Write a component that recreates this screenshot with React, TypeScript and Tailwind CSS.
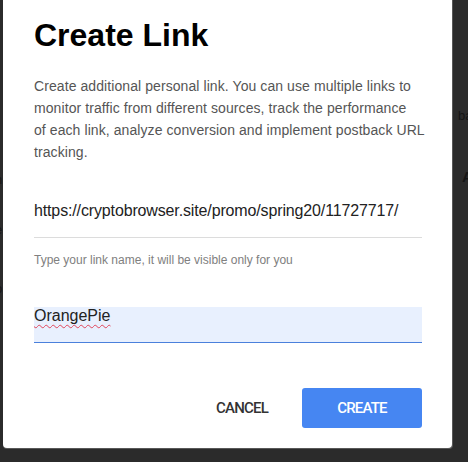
import React from "react";

export default function App() {
  return (
    <div
      className="relative w-[468px] h-[462px] overflow-hidden bg-[#2b2b2b]"
      style={{ fontFamily: '"Liberation Sans", Arial, sans-serif' }}
    >
      {/* faint page content behind the backdrop */}
      <div className="absolute left-[458px] top-[108px] flex flex-col gap-[44px] text-[#151515]">
        <span className="text-[13px] leading-[16px]">ba</span>
        <span className="pl-[4px] text-[15px] font-bold leading-[18px]">A</span>
      </div>
      <div className="absolute left-[-5px] top-[172px] flex flex-col gap-[34px] text-[13px] leading-[16px] text-[#151515]">
        <span>n</span>
        <span>e</span>
        <span className="mt-[9px]">o</span>
      </div>

      {/* dialog */}
      <div className="absolute left-[3px] top-0 w-[450px] h-[449px] rounded-b-[4px] bg-[#585858] pr-px pb-px">
        <div className="flex flex-col w-[449px] h-[448px] rounded-b-[4px] bg-white pl-[31px] pr-[30px] pt-[17px]">
          <h1 className="text-[32px] leading-[36px] font-bold text-black">Create Link</h1>
          <p className="mt-[22px] text-[14px] leading-[22px] tracking-[0.08px] text-[#555] whitespace-nowrap">
            Create additional personal link. You can use multiple links to
            <br />
            monitor traffic from different sources, track the performance
            <br />
            of each link, analyze conversion and implement postback URL
            <br />
            tracking.
          </p>
          <div className="mt-[36px] pb-[14px] border-b border-[#dcdcdc] text-[16px] leading-[24px] tracking-[-0.14px] text-[#222]">
            https://cryptobrowser.site/promo/spring20/11727717/
          </div>
          <div className="mt-[14px] text-[12px] leading-[16px] text-[#808080]">
            Type your link name, it will be visible only for you
          </div>
          <div className="mt-[39px] h-[36px] bg-[#e8f0fe] border-b border-[#4a80dc] text-[16px] leading-[18px] text-[#222]">
            <span className="underline decoration-wavy decoration-[#e0455a] decoration-1 underline-offset-[3px]">
              OrangePie
            </span>
          </div>
          <div
            className="mt-[45px] flex justify-end"
            style={{ fontFamily: 'Roboto, "Liberation Sans", sans-serif' }}
          >
            <button className="w-[120px] h-[40px] text-[15px] font-medium tracking-[-0.8px] text-[#333]">
              CANCEL
            </button>
            <button className="w-[120px] h-[40px] rounded-[3px] bg-[#4686f2] text-[15px] font-medium tracking-[-0.8px] text-white">
              CREATE
            </button>
          </div>
        </div>
      </div>
    </div>
  );
}
